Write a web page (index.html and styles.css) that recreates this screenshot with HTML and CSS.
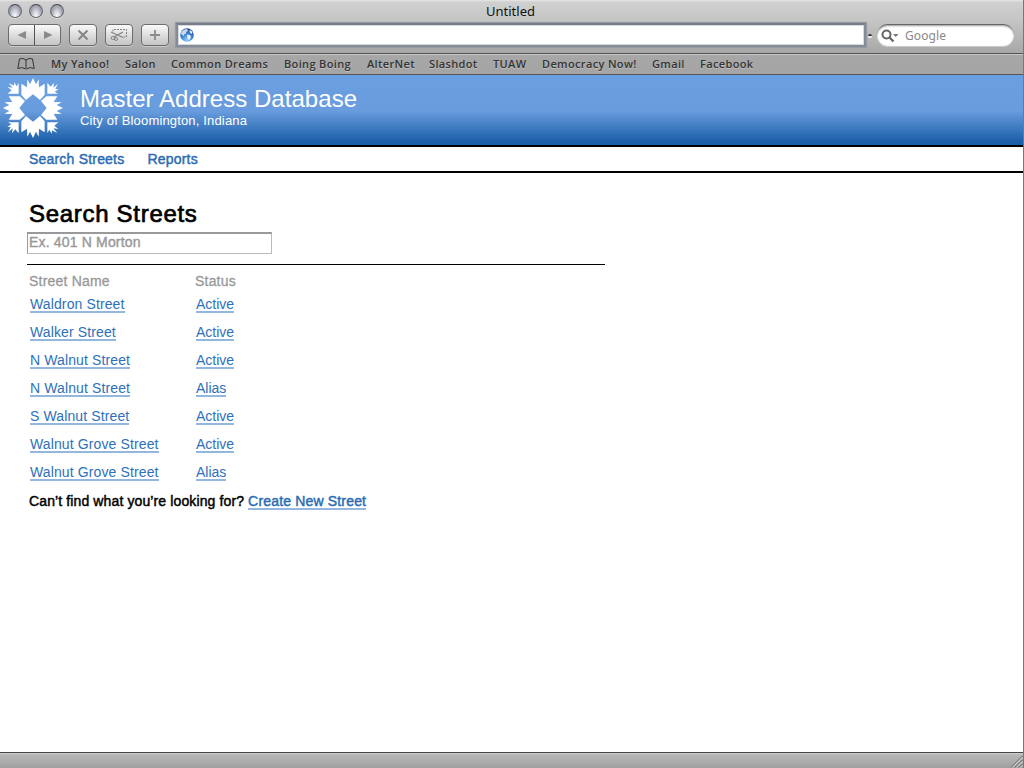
FILE: index.html
```html
<!DOCTYPE html>
<html lang="en">
<head>
<meta charset="utf-8">
<title>Untitled</title>
<link rel="stylesheet" href="styles.css">
</head>
<body>
<div class="window">
  <header class="chrome">
    <div class="titlebar">
      <div class="lights"><i></i><i></i><i></i></div>
      <div class="window-title">Untitled</div>
    </div>
    <div class="toolbar">
      <div class="btn pair">
        <span><svg width="10" height="10"><path d="M9 1v8L.5 5z" fill="#8b8b8b"/></svg></span>
        <span><svg width="10" height="10"><path d="M1 1v8l8.500-4z" fill="#8b8b8b"/></svg></span>
      </div>
      <div class="btn"><svg width="12" height="12"><path d="M1.500 1.500l9 9m0-9l-9 9" stroke="#858585" stroke-width="2"/></svg></div>
      <div class="btn"><svg width="18" height="14" fill="none" stroke="#858585"><path d="M3 3.500V1.500H16.500V9H12" stroke-dasharray="2 1"/><path d="M1 4l12 5.500M4 9L13 4" stroke-width="1.300"/><circle cx="2.800" cy="10" r="1.700"/><circle cx="6" cy="11" r="1.500"/></svg></div>
      <div class="btn"><svg width="12" height="12"><path d="M6 1v10M1 6h10" stroke="#8b8b8b" stroke-width="1.800"/></svg></div>
      <div class="address">
        <svg width="14" height="14" viewBox="0 0 14 14"><defs><radialGradient id="globe" cx=".5" cy=".85" r=".8"><stop offset="0" stop-color="#8fd0fa"/><stop offset=".55" stop-color="#397fce"/><stop offset="1" stop-color="#244f9b"/></radialGradient></defs><circle cx="7" cy="7" r="6.800" fill="url(#globe)"/><path d="M1.500 3.500Q4 .8 7 1L8 3 6 4 6.500 5.500 4.500 6 3.500 8 1 6z" fill="#e3edf8" opacity=".85"/><path d="M7 6.500l3 .5 1 2-2 3.500-1.500-2.500zM10 2l2.500 2-1 2L9.500 4z" fill="#e8f4fe"/></svg>
      </div>
      <svg class="grip" width="6" height="6"><circle cx="3" cy="3.200" r="2" fill="#eee"/><path d="M1 3a2 2 0 014 0z" fill="#333"/></svg>
      <div class="search">
        <svg width="18" height="14"><circle cx="5.500" cy="5.500" r="4" fill="none" stroke="#666" stroke-width="2"/><path d="M8.500 8.500l4 4" stroke="#666" stroke-width="2.300"/><path d="M12 5h5.500l-2.750 3z" fill="#777"/></svg>
        <span>Google</span>
      </div>
    </div>
    <nav class="bookmarks">
      <svg width="18" height="12" viewBox="0 0 18 12" fill="none" stroke="#333"><path d="M9 2Q6-.7 2.500 1L.8 10.500Q5 8.500 8.500 10.800h1Q13 8.500 17.200 10.500L15.500 1Q12-.7 9 2V10"/></svg>
      <span>My Yahoo!</span><span>Salon</span><span>Common Dreams</span><span>Boing Boing</span><span>AlterNet</span><span>Slashdot</span><span>TUAW</span><span>Democracy Now!</span><span>Gmail</span><span>Facebook</span>
    </nav>
  </header>

  <div class="banner">
    <svg class="logo" width="60" height="60" viewBox="-90 -90 180 180" fill="#fff">
      <defs><g id="petal"><path d="M0-90L9-71 17-86 18-62 35-73V-40L21-24 0-41-21-24-35-40V-73L-18-62-17-86-9-71z"/><path d="M-43-43H-76L-64-53-76-63-61-61-73-75-57-67-56-77-49-65-43-75z"/></g></defs>
      <use href="#petal"/><use href="#petal" transform="rotate(90)"/><use href="#petal" transform="rotate(180)"/><use href="#petal" transform="rotate(270)"/>
    </svg>
    <div class="brand">
      <div class="app-name">Master Address Database</div>
      <div class="city">City of Bloomington, Indiana</div>
    </div>
  </div>
  <nav class="site-nav"><a>Search Streets</a><a>Reports</a></nav>

  <main class="content">
    <h1>Search Streets</h1>
    <div class="query">Ex. 401 N Morton</div>
    <div class="results">
      <div class="row head"><span>Street Name</span><span>Status</span></div>
      <div class="row"><a>Waldron Street</a><a>Active</a></div>
      <div class="row"><a>Walker Street</a><a>Active</a></div>
      <div class="row"><a>N Walnut Street</a><a>Active</a></div>
      <div class="row"><a>N Walnut Street</a><a>Alias</a></div>
      <div class="row"><a>S Walnut Street</a><a>Active</a></div>
      <div class="row"><a>Walnut Grove Street</a><a>Active</a></div>
      <div class="row"><a>Walnut Grove Street</a><a>Alias</a></div>
    </div>
    <p class="missing"><span>Can’t find what you’re looking for?</span><a>Create New Street</a></p>
  </main>
  <footer class="statusbar"><svg width="13" height="13"><path d="M1 12.500L12.500 1M5 12.500L12.500 5M9 12.500L12.500 9" stroke="#555"/><path d="M2.200 12.500L12.500 2.200M6.200 12.500L12.500 6.200M10.200 12.500L12.500 10.200" stroke="#ddd"/></svg></footer>
</div>
</body>
</html>
```
FILE: styles.css
```css
* { box-sizing: border-box; }
body { margin: 0; background: #fff; font-family: "Liberation Sans", Arial, sans-serif; }
svg { display: block; flex: none; }
.window { width: 1024px; height: 768px; display: flex; flex-direction: column; border-right: 1px solid #777; overflow: hidden; white-space: nowrap; }
.chrome { height: 75px; flex: none; background: linear-gradient(#e8e8e8 0, #d0d0d0 2px, #c4c4c4 22px, #a7a7a7 53px, #a5a5a5 100%); border-bottom: 1px solid #555; }
.titlebar { height: 22px; display: grid; grid-template-columns: 76px 1fr 86px; padding-left: 8px; }
.lights { display: flex; gap: 7px; padding-top: 4px; }
.lights i { width: 14px; height: 14px; border-radius: 50%; border: 1px solid #666a72; border-top-color: #44464c; background: radial-gradient(ellipse at 50% 95%, #fff 0, #d2d4dc 35%, #a2a5b0 65%, #84878f 100%); box-shadow: 0 1px 0 #ddd; }
.window-title { text-align: center; font: 13px/22px "Noto Sans", sans-serif; color: #111; }
.toolbar { height: 31px; display: flex; align-items: flex-start; padding: 2px 0 0 8px; }
.btn { width: 28px; height: 22px; margin-right: 8px; border: 1px solid #6c6c6c; border-radius: 4px; background: linear-gradient(#fafafa, #dedede 50%, #c4c4c4); display: flex; align-items: center; justify-content: center; box-shadow: 0 1px 0 #c8c8c8; }
.pair { width: 53px; }
.pair span { flex: 1; height: 20px; display: flex; align-items: center; justify-content: center; }
.pair span + span { border-left: 1px solid #555; }
.address { width: 690px; height: 24px; margin: -1px 0 0 -1px; border: 2px solid #858c97; border-top-color: #777e89; background: #fff; box-shadow: inset 0 0 0 1px #d5d9e0, 0 0 1px 1px #959ba5; padding: 3px 0 0 2px; }
.grip { margin: 9px 0 0 1px; }
.search { width: 137px; height: 22px; margin-left: 4px; border-radius: 11px; background: #fff; border-top: 1px solid #666; box-shadow: inset 0 1px 2px #999, 0 1px 0 #ccc; display: flex; align-items: center; gap: 6px; padding-left: 4px; font: 12px "Noto Sans", sans-serif; letter-spacing: .1px; color: #888; }
.bookmarks { height: 21px; border-top: 1px solid #555; box-shadow: inset 0 1px 0 #c6c6c6; display: grid; grid-template-columns: 19px 59px 31px 98px 68px 47px 49px 34px 95px 33px 54px; column-gap: 15px; align-items: center; padding-left: 17px; font: 600 11px/20px "Open Sans", sans-serif; letter-spacing: .35px; color: #333; text-shadow: 0 1px 0 #c0c0c0; }
.banner { height: 70px; flex: none; display: flex; background: linear-gradient(#6a9fe1 0, #689cdd 36px, #1d60a9 66px, #185da7 100%); color: #fff; }
.logo { margin: 3px 0 0 3px; }
.brand { padding: 10px 0 0 17px; }
.app-name { font-size: 24px; line-height: 28px; letter-spacing: .04px; }
.city { font-size: 13px; line-height: 15px; letter-spacing: .16px; }
.site-nav { height: 28px; flex: none; border-top: 2px solid #000; border-bottom: 2px solid #000; display: flex; gap: 23px; padding-left: 29px; font-size: 14px; line-height: 24px; letter-spacing: .2px; color: #2a6cb4; -webkit-text-stroke: .45px; }
.content { flex: 1; padding: 27px 0 0 27px; font-size: 14px; }
h1 { margin: 0 0 4px 2px; font-size: 24px; line-height: 28px; font-weight: 400; letter-spacing: .7px; -webkit-text-stroke: .7px; }
.query { width: 245px; height: 22px; border: 1px solid #bbb; border-top: 2px solid #999; border-left-color: #999; color: #999; padding-left: 1px; line-height: 17px; letter-spacing: .17px; -webkit-text-stroke: .4px; }
.results { width: 578px; margin-top: 10px; border-top: 1px solid #000; padding: 6px 0 0 3px; letter-spacing: .12px; }
.row { height: 28px; display: grid; grid-template-columns: 166px 1fr; justify-items: start; align-items: start; }
.row a { line-height: 19px; height: 18px; border-bottom: 2px solid #94b7e0; color: #2f70bb; }
.row a + a { letter-spacing: 0; }
.head { height: 24px; color: #999; line-height: 21px; -webkit-text-stroke: .3px; margin-left: -1px; letter-spacing: .2px; }
.missing { display: flex; gap: 4px; margin: 1px 0 0 2px; line-height: 19px; letter-spacing: .12px; }
.missing span, .missing a { -webkit-text-stroke: .45px; }
.missing a { color: #2a6cb4; height: 18px; border-bottom: 2px solid #94b7e0; letter-spacing: .17px; }
.statusbar { height: 16px; flex: none; border-top: 1px solid #444; box-shadow: inset 0 1px 0 #ccc; background: linear-gradient(#bbb, #a0a0a0); display: flex; justify-content: flex-end; align-items: flex-end; }
```
